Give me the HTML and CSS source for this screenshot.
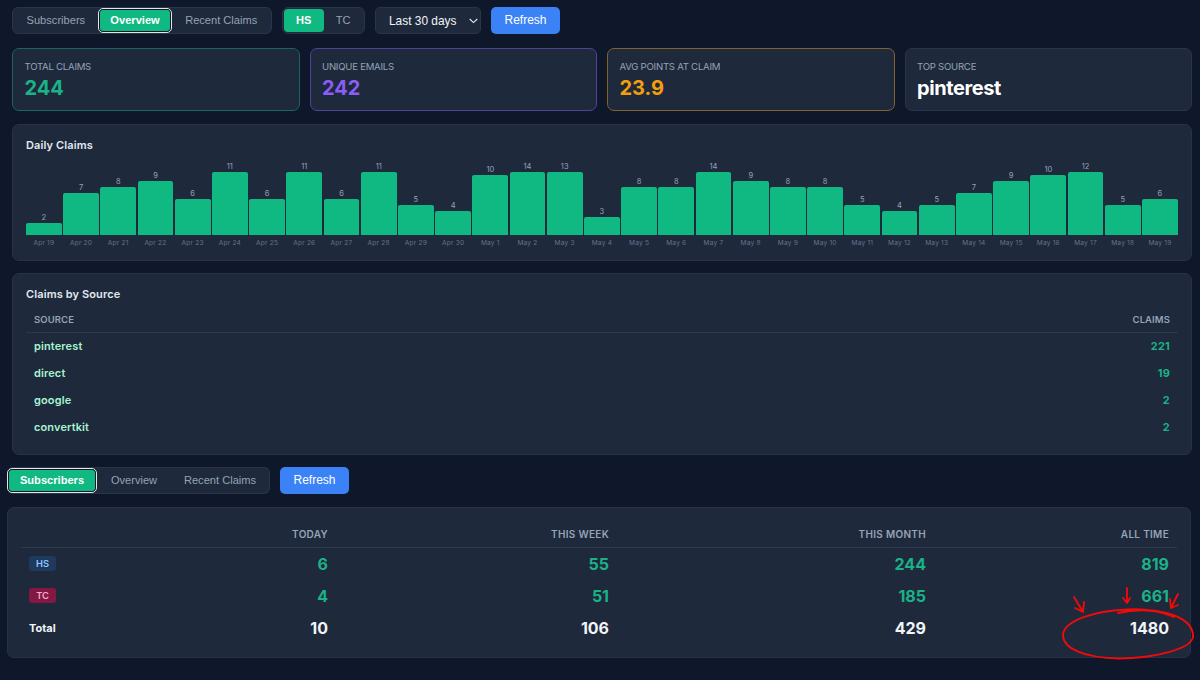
FILE: index.html
```html
<!DOCTYPE html>
<html lang="en">
  <head>
    <meta charset="UTF-8" />
    <meta name="viewport" content="width=device-width, initial-scale=1.0" />
    <title>Claims Dashboard</title>
    <link rel="stylesheet" href="styles.css">
  </head>
  <body>
    <section class="overview">
      <div class="toolbar">
        <div class="tabs">
          <button class="tab-subs">Subscribers</button>
          <button class="tab-over active focused">Overview</button>
          <button class="tab-recent">Recent Claims</button>
        </div>
        <div class="tabs sites">
          <button class="active">HS</button>
          <button>TC</button>
        </div>
        <button class="range">
          Last 30 days
          <svg width="9" height="6" viewBox="0 0 9 6"><path d="M0.7 1 L4.5 4.6 L8.3 1" /></svg>
        </button>
        <button class="refresh">Refresh</button>
      </div>

      <div class="cards">
        <div class="card green">
          <div class="label">TOTAL CLAIMS</div>
          <div class="value">244</div>
        </div>
        <div class="card purple">
          <div class="label">UNIQUE EMAILS</div>
          <div class="value">242</div>
        </div>
        <div class="card orange">
          <div class="label">AVG POINTS AT CLAIM</div>
          <div class="value">23.9</div>
        </div>
        <div class="card">
          <div class="label">TOP SOURCE</div>
          <div class="value name">pinterest</div>
        </div>
      </div>

      <div class="panel daily">
        <h3>Daily Claims</h3>
        <div class="chart" id="chart"></div>
      </div>

      <div class="panel sources">
        <h3>Claims by Source</h3>
        <table>
          <thead>
            <tr><th>SOURCE</th><th>CLAIMS</th></tr>
          </thead>
          <tbody>
            <tr><td>pinterest</td><td>221</td></tr>
            <tr><td>direct</td><td>19</td></tr>
            <tr><td>google</td><td>2</td></tr>
            <tr><td>convertkit</td><td>2</td></tr>
          </tbody>
        </table>
      </div>
    </section>

    <section class="subscribers">
      <div class="toolbar">
        <div class="tabs">
          <button class="tab-subs active focused">Subscribers</button>
          <button class="tab-over">Overview</button>
          <button class="tab-recent">Recent Claims</button>
        </div>
        <button class="refresh">Refresh</button>
      </div>

      <div class="panel totals">
        <table>
          <colgroup>
            <col class="c-site"><col class="c-today"><col class="c-week"><col class="c-month"><col class="c-all">
          </colgroup>
          <thead>
            <tr><th></th><th>TODAY</th><th>THIS WEEK</th><th>THIS MONTH</th><th>ALL TIME</th></tr>
          </thead>
          <tbody>
            <tr><td><span class="badge hs">HS</span></td><td>6</td><td>55</td><td>244</td><td>819</td></tr>
            <tr><td><span class="badge tc">TC</span></td><td>4</td><td>51</td><td>185</td><td>661</td></tr>
            <tr class="sum"><td>Total</td><td>10</td><td>106</td><td>429</td><td>1480</td></tr>
          </tbody>
        </table>
        <svg class="marks" width="140" height="80" viewBox="1058 584 140 80">
          <path d="M1118 613 C1140 608 1164 611 1173 616 M1118 613 C1150 605 1190 614 1193 634 C1196 650 1150 658 1119 658.500 C1083 658 1063 648 1063 635 C1064 620 1096 611 1126 609.500 C1146 608 1160 611 1174 617" />
          <path d="M1074 597 L1083 612 M1075 608 L1083 612 L1084 602" />
          <path d="M1127 588 L1127 603 M1123 598 L1127 603 L1130 598" />
          <path d="M1178 594 L1171 608 M1170 599 L1171 608 L1178 605" />
        </svg>
      </div>
    </section>

    <script>
      const claims = [
        2, 7, 8, 9, 6, 11, 6, 11, 6, 11, 5, 4, 10, 14, 13, 3,
        8, 8, 14, 9, 8, 8, 5, 4, 5, 7, 9, 10, 12, 5, 6
      ];
      const MAX_HEIGHT = 63;
      const chart = document.getElementById("chart");

      claims.forEach((count, i) => {
        const label = i < 12 ? "Apr " + (19 + i) : "May " + (i - 11);
        const height = Math.min(count * 6.05, MAX_HEIGHT);
        const day = document.createElement("div");
        day.className = "day";
        day.innerHTML = `
          <span class="count">${count}</span>
          <div class="bar" style="height: ${height}px"></div>
          <span class="date">${label}</span>`;
        chart.appendChild(day);
      });
    </script>
  </body>
</html>
```
FILE: styles.css
```css
* {
  box-sizing: border-box;
}

body {
  margin: 0;
  height: 680px;
  overflow: hidden;
  background: #0f172a;
  color: #e2e8f0;
  font-family: Inter, sans-serif;
}

.overview {
  padding: 7px 8px 0 12px;
}

.subscribers {
  padding: 12px 9px 0 7px;
}

/* toolbar */
.toolbar {
  display: flex;
  gap: 10px;
  height: 27px;
}

button {
  padding: 0 0 1px;
  border: none;
  border-radius: 5px;
  background: transparent;
  color: #94a3b8;
  font-family: "Liberation Sans", Arial, sans-serif;
  font-size: 11.1px;
  white-space: nowrap;
}

.tabs {
  display: flex;
  padding: 0 1px;
  width: 260px;
  border: 1px solid #293548;
  border-radius: 6px;
  background: #1e293b;
}

.tab-subs {
  width: 84px;
}

.tab-over {
  width: 75px;
}

.tab-recent {
  width: 98px;
}

button.active {
  background: #10b981;
  color: #fff;
  font-weight: bold;
}

button.focused {
  border: 2px solid #0f172a;
  outline: 1.5px solid #e5e5e5;
  outline-offset: -1px;
}

.subscribers .tabs {
  width: 263px;
  padding: 0;
  border-left: none;
}

.subscribers .tab-subs {
  width: 90px;
}

.subscribers .tab-over {
  width: 74px;
}

.sites {
  width: 83px;
  padding: 1px;
}

.sites button {
  width: 40px;
  border-radius: 4px;
}

.range {
  display: flex;
  align-items: center;
  justify-content: space-between;
  width: 106px;
  padding: 0 2px 0 13px;
  border: 1px solid #293548;
  background: #1e293b;
  color: #f1f5f9;
  font-size: 11.9px;
}

.range svg {
  fill: none;
  stroke: #e2e8f0;
  stroke-width: 1.1;
}

.refresh {
  width: 69px;
  background: #3b82f6;
  color: #fff;
  font-size: 12px;
}

/* stat cards */
.cards {
  display: grid;
  grid-template-columns: repeat(4, 1fr);
  gap: 10px;
  margin-top: 14px;
}

.card {
  height: 63px;
  padding: 11px 11.5px;
  border: 1px solid #293548;
  border-radius: 7px;
  background: #1e293b;
}

.card.green {
  border-color: #1a6659;
}

.card.purple {
  border-color: #50429a;
}

.card.orange {
  border-color: #84602a;
}

.label {
  color: #94a3b8;
  font-size: 9.6px;
  line-height: 14px;
  letter-spacing: -0.25px;
}

.value {
  margin-top: 1px;
  color: #fff;
  font-size: 20px;
  font-weight: 700;
  line-height: 26px;
}

.value.name {
  letter-spacing: -0.4px;
}

.green .value {
  color: #1ab286;
}

.purple .value {
  color: #8b5cf6;
}

.orange .value {
  color: #f59e0b;
}

/* panels */
.panel {
  border: 1px solid #263346;
  border-radius: 7px;
  background: #1e293b;
}

h3 {
  margin: 0;
  font-size: 11px;
  font-weight: 600;
  line-height: 14px;
  letter-spacing: 0.12px;
}

.daily {
  height: 137px;
  margin-top: 13px;
  padding: 13px;
}

.chart {
  display: flex;
  align-items: flex-end;
  gap: 1.5px;
  height: 98px;
  padding-bottom: 2px;
}

.day {
  display: flex;
  flex: 1;
  flex-direction: column;
  align-items: center;
}

.count {
  color: #94a3b8;
  font-size: 7.5px;
  line-height: 10px;
}

.bar {
  width: 100%;
  border-radius: 2px 2px 0 0;
  background: #10b981;
}

.date {
  margin-top: 4px;
  color: #64748b;
  font-size: 6.6px;
  line-height: 9px;
  letter-spacing: 0.2px;
  white-space: nowrap;
}

table {
  width: 100%;
  border-collapse: collapse;
}

th {
  border-bottom: 1px solid #2d3a4e;
  color: #94a3b8;
  font-size: 9.5px;
  font-weight: 600;
  letter-spacing: 0.1px;
}

th,
td {
  padding: 0 8px;
  text-align: right;
}

th:first-child,
td:first-child {
  text-align: left;
}

.sources {
  height: 182px;
  margin-top: 12px;
  padding: 14px 13px;
}

.sources h3 {
  line-height: 13px;
}

.sources th {
  height: 31px;
  padding-top: 7px;
}

.sources td {
  height: 27px;
  padding-top: 1px;
  color: #1ab286;
  font-size: 11px;
  font-weight: 700;
  letter-spacing: 0.2px;
}

.sources td:first-child {
  color: #a7f3d0;
  font-weight: 600;
  letter-spacing: 0.12px;
}

/* subscriber totals */
.totals {
  position: relative;
  height: 151px;
  margin-top: 13px;
  padding: 13px;
}

.totals table {
  table-layout: fixed;
}

.c-site {
  width: 100px;
}

.c-today {
  width: 215px;
}

.c-week {
  width: 281px;
}

.c-month {
  width: 317px;
}

.totals th {
  height: 26px;
  font-size: 10px;
  letter-spacing: 0.3px;
}

.totals td {
  height: 32px;
  padding-top: 1px;
  color: #1ab286;
  font-size: 16px;
  font-weight: 700;
}

.totals .sum td {
  color: #f1f5f9;
}

.totals .sum td:first-child {
  font-size: 11px;
}

.badge {
  display: block;
  width: 27px;
  height: 15px;
  border-radius: 3px;
  font-size: 9.3px;
  font-weight: 600;
  line-height: 15px;
  text-align: center;
}

.hs {
  background: #1e3a5f;
  color: #93c5fd;
}

.tc {
  background: #831843;
  color: #f9a8d4;
}

/* hand drawn circle and arrows around the grand total */
.marks {
  position: absolute;
  top: 76px;
  right: -8px;
  fill: none;
  stroke: #f00a0a;
  stroke-width: 1.9;
  stroke-linecap: round;
  stroke-linejoin: round;
}
```
